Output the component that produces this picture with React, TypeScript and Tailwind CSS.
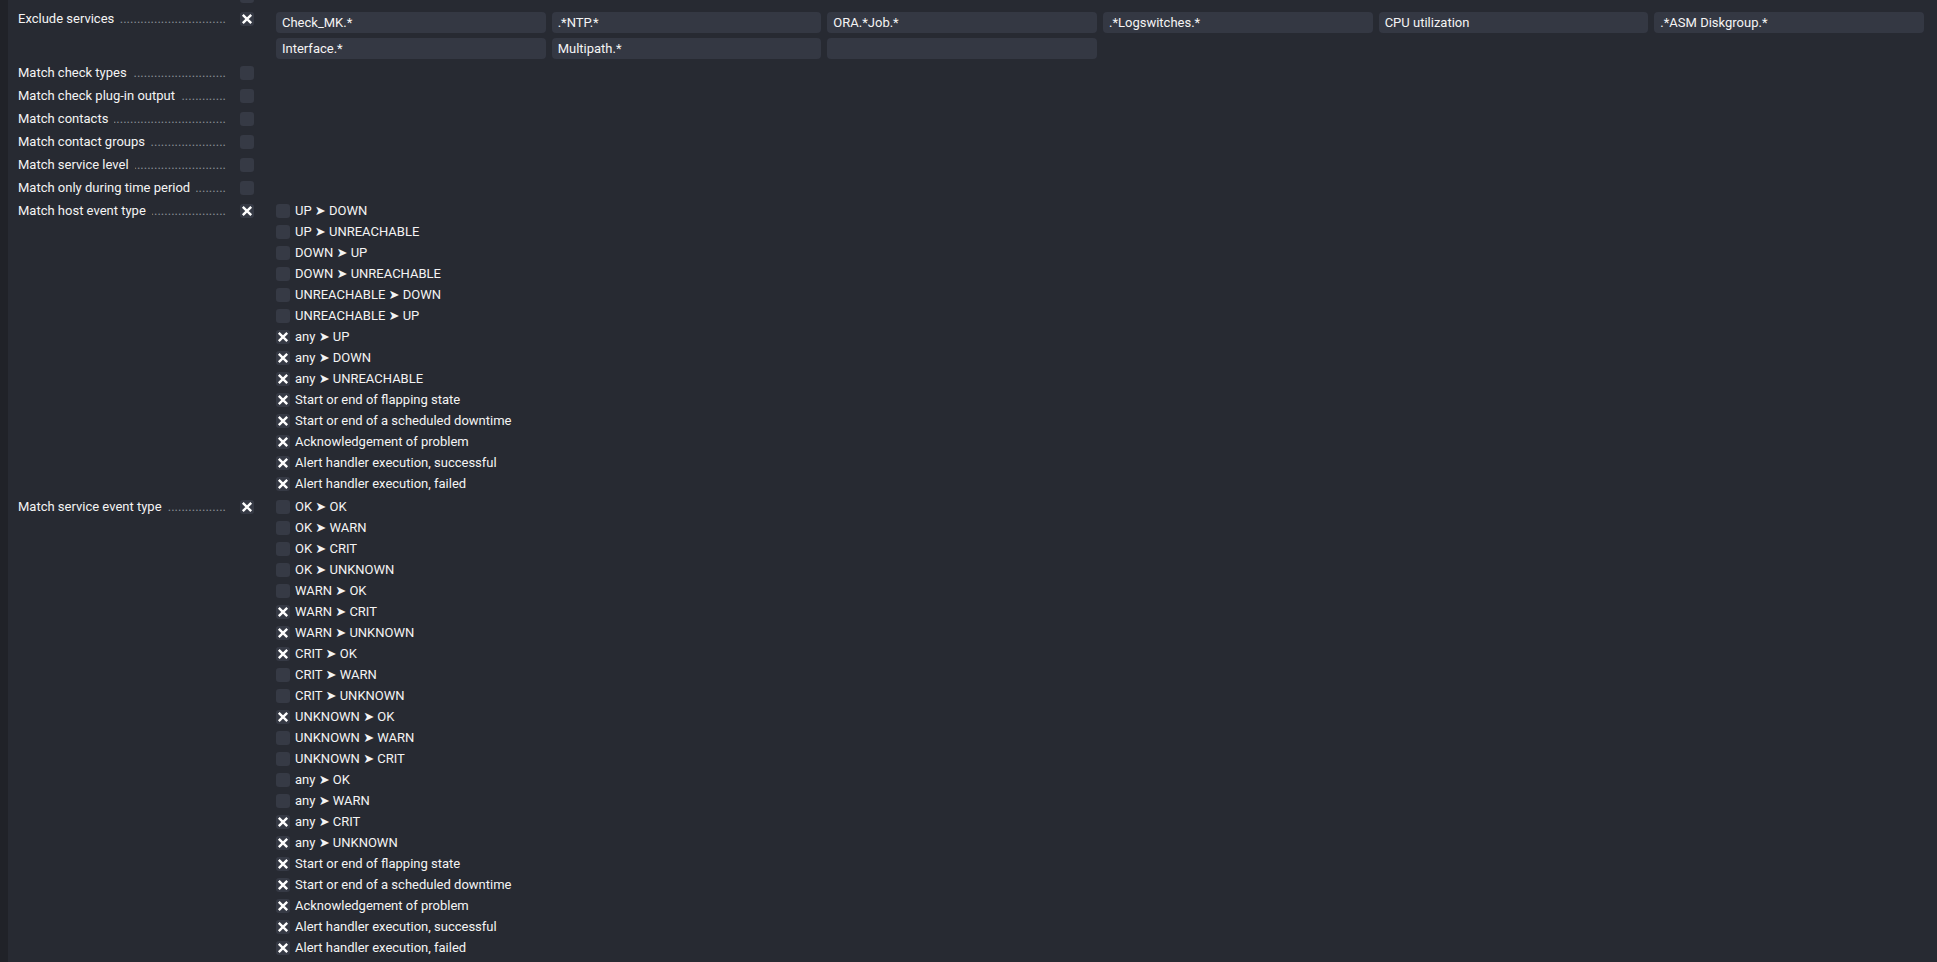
import React from "react";

const font = { fontFamily: "Roboto, 'DejaVu Sans', sans-serif" };

function Check({ on }: { on?: boolean }) {
  return (
    <div className="w-[14px] h-[14px] shrink-0 rounded-[3px] bg-[#363a45] flex items-center justify-center">
      {on && (
        <svg width="14" height="14" viewBox="0 0 14 14">
          <path d="M2.8 2.8 L11.2 11.2 M11.2 2.8 L2.8 11.2" stroke="#ffffff" strokeWidth="2.4" strokeLinecap="butt" fill="none" />
        </svg>
      )}
    </div>
  );
}

const DOTS = ".".repeat(90);

function Label({ text }: { text: string }) {
  return (
    <div className="w-[208px] shrink-0 flex items-start h-[14px] leading-[14px] overflow-hidden">
      <span className="whitespace-nowrap text-[#f4f4f4]">{text}</span>
      <span className="flex-1 overflow-hidden whitespace-nowrap text-[#8a8e96] ml-[6px] text-right" style={{ direction: "rtl" }}>{DOTS}</span>
    </div>
  );
}

function Row({ label, on, children, extra }: { label: string; on?: boolean; children?: React.ReactNode; extra?: string }) {
  return (
    <div className={"flex items-start " + (extra ?? "pt-[4px] pb-[5px]")}>
      <Label text={label} />
      <div className="ml-[14px]">
        <Check on={on} />
      </div>
      <div className="ml-[22px] flex-1 mr-[13px]">{children}</div>
    </div>
  );
}

function Item({ text, on }: { text: string; on?: boolean }) {
  const parts = text.split("➤");
  return (
    <div className="flex items-center h-[14px] mb-[7px] last:mb-0">
      <Check on={on} />
      <span className="ml-[5px] leading-[14px] whitespace-nowrap text-[#f4f4f4]">
        {parts.length === 2 ? (
          <>
            {parts[0]}
            <span style={{ fontFamily: "'DejaVu Sans', sans-serif" }} className="text-[13px]">➤</span>
            {parts[1]}
          </>
        ) : (
          text
        )}
      </span>
    </div>
  );
}

const hostEvents: [string, boolean][] = [
  ["UP ➤ DOWN", false],
  ["UP ➤ UNREACHABLE", false],
  ["DOWN ➤ UP", false],
  ["DOWN ➤ UNREACHABLE", false],
  ["UNREACHABLE ➤ DOWN", false],
  ["UNREACHABLE ➤ UP", false],
  ["any ➤ UP", true],
  ["any ➤ DOWN", true],
  ["any ➤ UNREACHABLE", true],
  ["Start or end of flapping state", true],
  ["Start or end of a scheduled downtime", true],
  ["Acknowledgement of problem", true],
  ["Alert handler execution, successful", true],
  ["Alert handler execution, failed", true],
];

const serviceEvents: [string, boolean][] = [
  ["OK ➤ OK", false],
  ["OK ➤ WARN", false],
  ["OK ➤ CRIT", false],
  ["OK ➤ UNKNOWN", false],
  ["WARN ➤ OK", false],
  ["WARN ➤ CRIT", true],
  ["WARN ➤ UNKNOWN", true],
  ["CRIT ➤ OK", true],
  ["CRIT ➤ WARN", false],
  ["CRIT ➤ UNKNOWN", false],
  ["UNKNOWN ➤ OK", true],
  ["UNKNOWN ➤ WARN", false],
  ["UNKNOWN ➤ CRIT", false],
  ["any ➤ OK", false],
  ["any ➤ WARN", false],
  ["any ➤ CRIT", true],
  ["any ➤ UNKNOWN", true],
  ["Start or end of flapping state", true],
  ["Start or end of a scheduled downtime", true],
  ["Acknowledgement of problem", true],
  ["Alert handler execution, successful", true],
  ["Alert handler execution, failed", true],
];

const excludes = [
  "Check_MK.*",
  ".*NTP.*",
  "ORA.*Job.*",
  ".*Logswitches.*",
  "CPU utilization",
  ".*ASM Diskgroup.*",
  "Interface.*",
  "Multipath.*",
  "",
];

export default function App() {
  return (
    <div className="min-h-screen w-full bg-[#272a32] flex text-[13px]" style={font}>
      <div className="w-[8px] shrink-0 bg-[#202228]" />
      <div className="flex-1 pl-[10px] flex flex-col">
        <div className="h-[3px] overflow-hidden flex items-end">
          <div className="w-[208px]" />
          <div className="ml-[14px]">
            <div className="w-[14px] h-[14px] rounded-[3px] bg-[#363a45]" />
          </div>
        </div>
        <Row label="Exclude services" on extra="pt-[9px] pb-[3px]">
          <div className="grid grid-cols-6 gap-x-[6px] gap-y-[5px]">
            {excludes.map((e, i) => (
              <div key={i} className="h-[21px] rounded-[4px] bg-[#343843] px-[6px] flex items-center text-[#f4f4f4] whitespace-nowrap overflow-hidden">
                {e}
              </div>
            ))}
          </div>
        </Row>
        <Row label="Match check types" />
        <Row label="Match check plug-in output" />
        <Row label="Match contacts" />
        <Row label="Match contact groups" />
        <Row label="Match service level" />
        <Row label="Match only during time period" />
        <Row label="Match host event type" on>
          <div className="flex flex-col">
            {hostEvents.map(([t, o], i) => (
              <Item key={i} text={t} on={o} />
            ))}
          </div>
        </Row>
        <Row label="Match service event type" on>
          <div className="flex flex-col">
            {serviceEvents.map(([t, o], i) => (
              <Item key={i} text={t} on={o} />
            ))}
          </div>
        </Row>
      </div>
    </div>
  );
}
